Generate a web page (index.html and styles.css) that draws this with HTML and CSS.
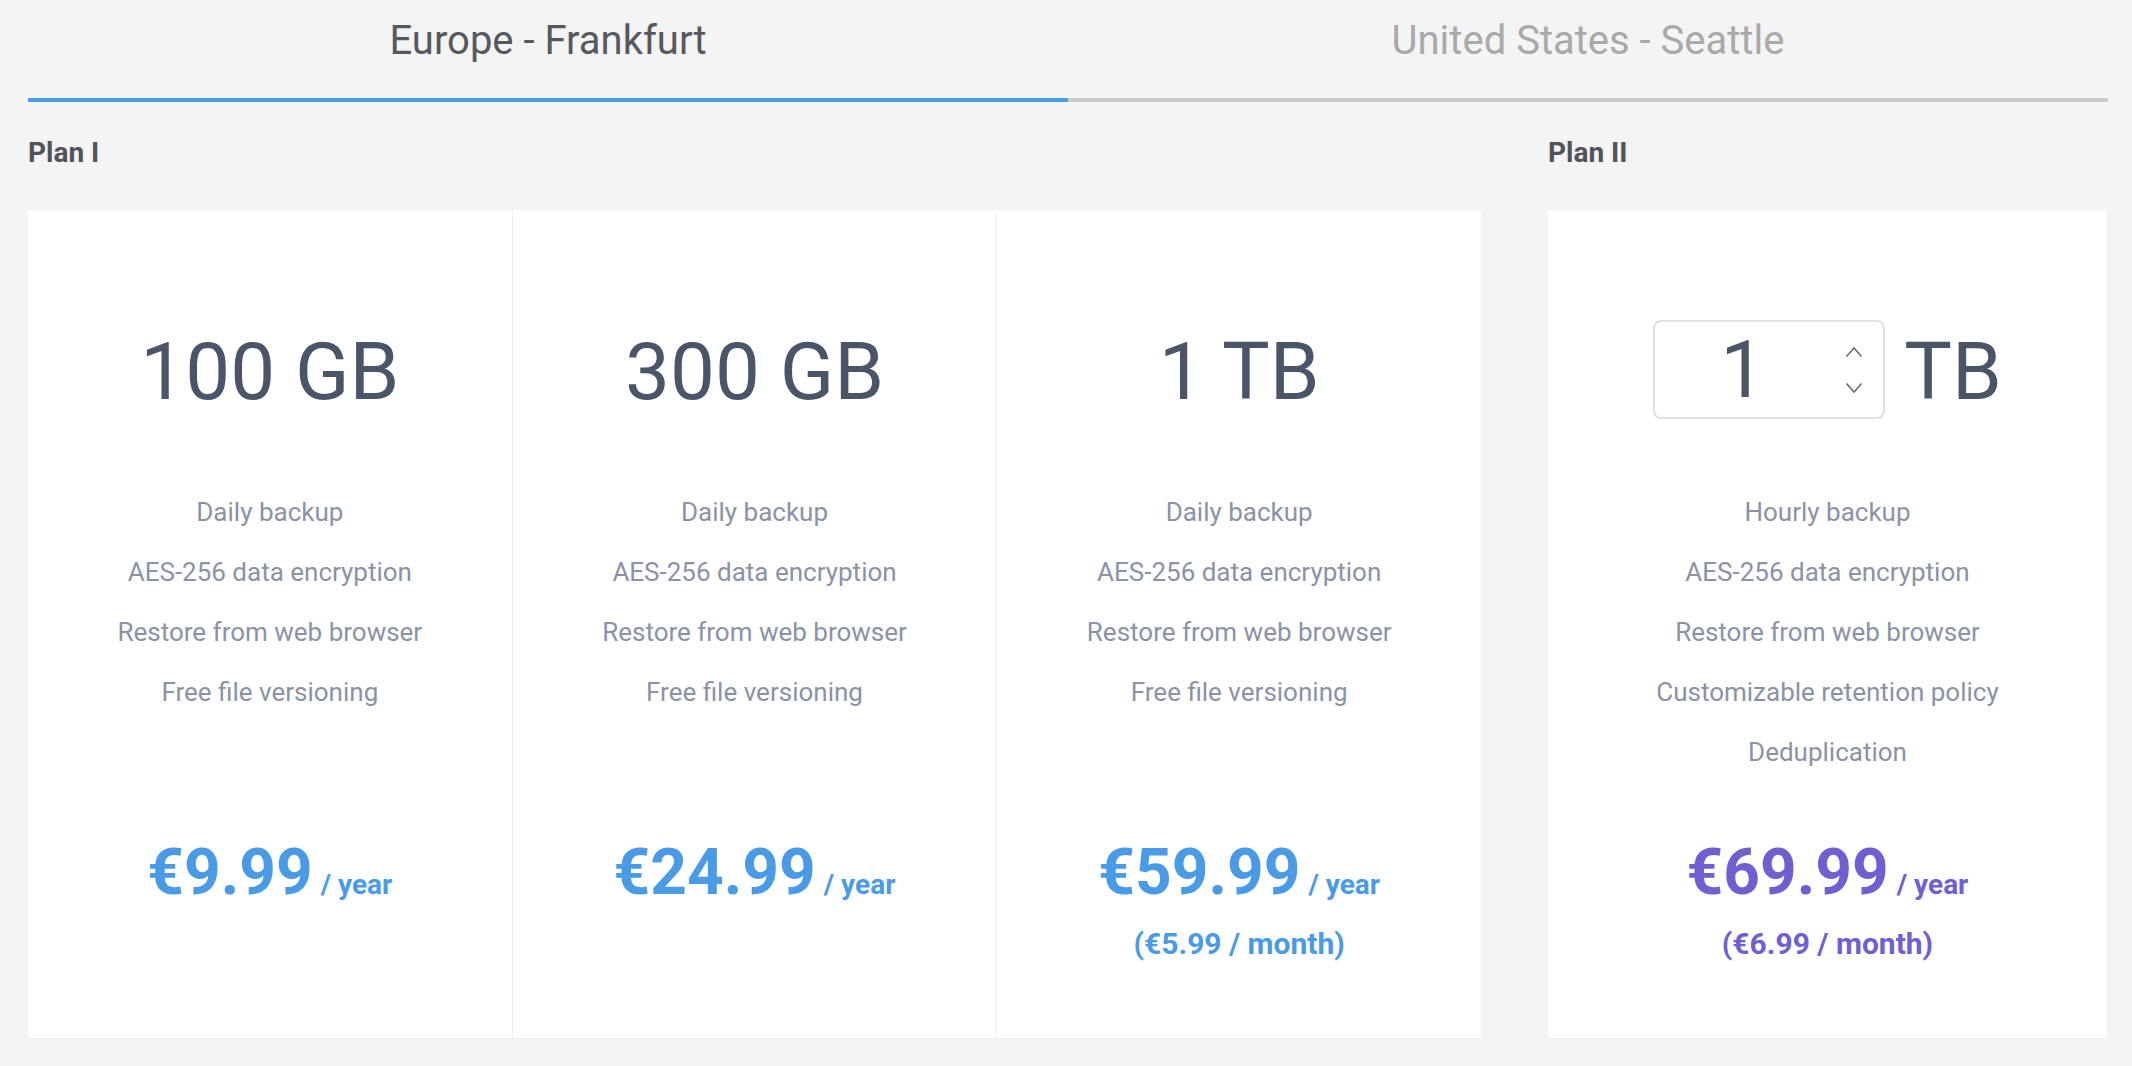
FILE: index.html
```html
<!DOCTYPE html>
<html lang="en">
<head>
  <meta charset="UTF-8">
  <meta name="viewport" content="width=device-width, initial-scale=1.0">
  <title>Pricing</title>
  <link rel="stylesheet" href="styles.css">
</head>
<body>
  <div class="page">
    <div class="tabs">
      <div class="tab active">Europe - Frankfurt</div>
      <div class="tab">United States - Seattle</div>
    </div>

    <div class="plans">
      <div class="plan plan-one">
        <h2 class="plan-title">Plan I</h2>
        <div class="cards">
          <div class="card">
            <div class="size">100 GB</div>
            <ul class="features">
              <li>Daily backup</li>
              <li>AES-256 data encryption</li>
              <li>Restore from web browser</li>
              <li>Free file versioning</li>
            </ul>
            <div class="price blue">€9.99<span class="per">/ year</span></div>
          </div>
          <div class="card">
            <div class="size">300 GB</div>
            <ul class="features">
              <li>Daily backup</li>
              <li>AES-256 data encryption</li>
              <li>Restore from web browser</li>
              <li>Free file versioning</li>
            </ul>
            <div class="price blue">€24.99<span class="per">/ year</span></div>
          </div>
          <div class="card">
            <div class="size">1 TB</div>
            <ul class="features">
              <li>Daily backup</li>
              <li>AES-256 data encryption</li>
              <li>Restore from web browser</li>
              <li>Free file versioning</li>
            </ul>
            <div class="price blue">€59.99<span class="per">/ year</span></div>
            <div class="monthly blue">(€5.99 / month)</div>
          </div>
        </div>
      </div>

      <div class="plan plan-two">
        <h2 class="plan-title">Plan II</h2>
        <div class="cards">
          <div class="card">
            <div class="size">
              <div class="spinner">
                <span class="spinner-value">1</span>
                <span class="spinner-arrows">
                  <svg width="18" height="12" viewBox="0 0 18 12"><path d="M1.5 10.5 L9 2 L16.5 10.5" fill="none" stroke="#6b6b6b" stroke-width="1.6"/></svg>
                  <svg width="18" height="12" viewBox="0 0 18 12"><path d="M1.5 1.5 L9 10 L16.5 1.5" fill="none" stroke="#6b6b6b" stroke-width="1.6"/></svg>
                </span>
              </div>
              <span class="unit">TB</span>
            </div>
            <ul class="features">
              <li>Hourly backup</li>
              <li>AES-256 data encryption</li>
              <li>Restore from web browser</li>
              <li>Customizable retention policy</li>
              <li>Deduplication</li>
            </ul>
            <div class="price purple">€69.99<span class="per">/ year</span></div>
            <div class="monthly purple">(€6.99 / month)</div>
          </div>
        </div>
      </div>
    </div>
  </div>
</body>
</html>
```

FILE: styles.css
```css
body {
  margin: 0;
  background-color: #f4f4f4;
  font-family: Roboto, "Liberation Sans", sans-serif;
}
.page {
  padding: 0 24px 0 28px;
}

.tabs {
  display: flex;
}
.tab {
  flex: 1;
  text-align: center;
  font-size: 40px;
  line-height: 46px;
  padding: 18px 0 34px;
  color: #a9a9a9;
  border-bottom: 4px solid #cbcbcb;
}
.tab.active {
  color: #55585d;
  border-bottom-color: #4a9be5;
}

.plans {
  display: flex;
  justify-content: space-between;
}
.plan-one { width: 1453px; }
.plan-two { width: 560px; }

.plan-title {
  margin: 34px 0 41px;
  font-size: 28px;
  line-height: 33px;
  font-weight: bold;
  color: #505358;
}

.cards {
  display: flex;
  gap: 1px;
  background-color: #eceef2;
  border-bottom: 1px solid #eceef2;
}
.card {
  flex: 1;
  height: 828px;
  background-color: #fff;
  text-align: center;
  padding-top: 121px;
  box-sizing: border-box;
}
.plan-two .cards { border-right: 1px solid #eceef2; }

.size {
  font-size: 80px;
  line-height: 82px;
  color: #4a5568;
  height: 82px;
  display: flex;
  justify-content: center;
  align-items: center;
}

.features {
  list-style: none;
  margin: 69px 0 0;
  padding: 0;
  height: 300px;
  font-size: 26px;
  line-height: 60px;
  color: #8a93a5;
}

.price {
  margin-top: 59px;
  font-size: 64px;
  line-height: 64px;
  font-weight: bold;
}
.per {
  font-size: 28px;
  margin-left: 8px;
}
.monthly {
  margin-top: 7px;
  font-size: 30px;
  line-height: 40px;
  font-weight: bold;
}
.blue { color: #4a9be5; }
.purple { color: #705fd0; }

.spinner {
  display: flex;
  align-items: center;
  width: 232px;
  height: 99px;
  box-sizing: border-box;
  border: 2px solid #e0e0e0;
  border-radius: 8px;
  margin-top: -5px;
  margin-right: 19px;
}
.spinner-value {
  width: 175px;
  text-align: center;
}
.spinner-arrows {
  display: flex;
  flex-direction: column;
  gap: 24px;
  padding-left: 15px;
}
.spinner-arrows svg { display: block; }
```
